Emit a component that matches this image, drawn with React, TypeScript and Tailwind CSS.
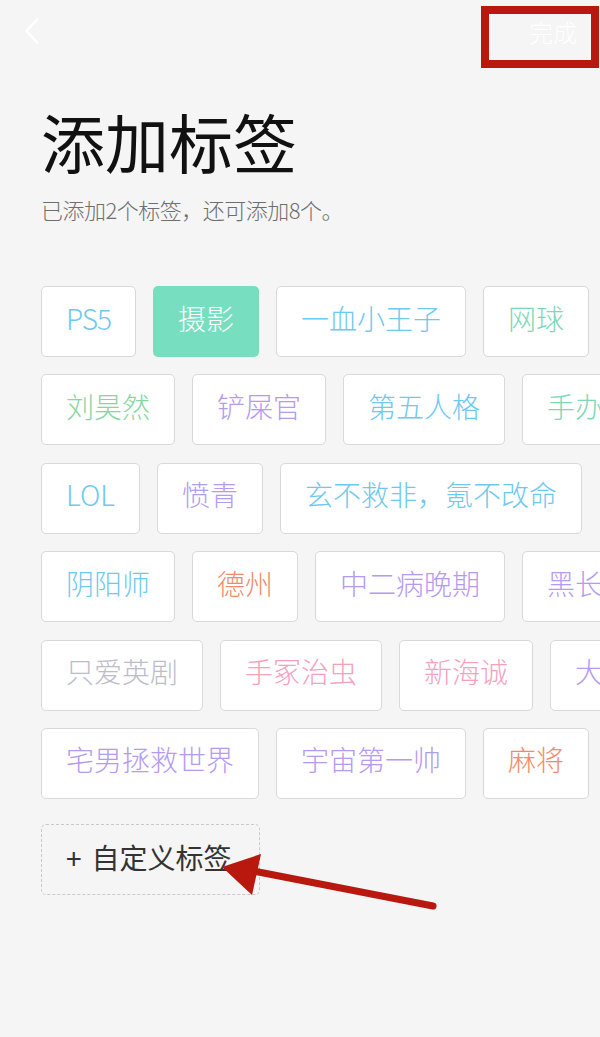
import React from "react";

type Tag = { t: string; c: string; active?: boolean; x?: string };

const BLUE = "text-[#6ec9ef]";
const GREEN = "text-[#86d6a2]";
const TEAL = "text-[#7bd9b6]";
const PURPLE = "text-[#b59af0]";
const ORANGE = "text-[#ef8b6c]";
const PINK = "text-[#f5a1bd]";
const GRAY = "text-[#bcbccb]";

const rows: Tag[][] = [
  [
    { t: "PS5", c: BLUE, x: "tracking-[-1px]" },
    { t: "摄影", c: "text-white", active: true },
    { t: "一血小王子", c: BLUE },
    { t: "网球", c: TEAL },
  ],
  [
    { t: "刘昊然", c: GREEN },
    { t: "铲屎官", c: PURPLE },
    { t: "第五人格", c: BLUE },
    { t: "手办控", c: TEAL },
  ],
  [
    { t: "LOL", c: BLUE },
    { t: "愤青", c: PURPLE },
    { t: "玄不救非，氪不改命", c: BLUE },
  ],
  [
    { t: "阴阳师", c: BLUE },
    { t: "德州", c: ORANGE },
    { t: "中二病晚期", c: PURPLE },
    { t: "黑长直", c: PURPLE },
  ],
  [
    { t: "只爱英剧", c: GRAY },
    { t: "手冢治虫", c: PINK },
    { t: "新海诚", c: PINK },
    { t: "大长腿", c: PURPLE },
  ],
  [
    { t: "宅男拯救世界", c: PURPLE },
    { t: "宇宙第一帅", c: PURPLE },
    { t: "麻将", c: ORANGE },
  ],
];

function TagChip({ tag }: { tag: Tag }) {
  return (
    <div
      className={
        tag.active
          ? "shrink-0 h-[71px] px-[25px] pb-[8px] flex items-center rounded-[5px] bg-[#78dec0] text-[28px] font-light leading-none text-white"
          : `shrink-0 h-[71px] px-[24px] pb-[8px] flex items-center rounded-[5px] bg-white border border-[#d9d9d9] text-[28px] font-light leading-none ${tag.c} ${tag.x ?? ""}`
      }
    >
      {tag.t}
    </div>
  );
}

export default function App() {
  return (
    <div className="relative w-[600px] h-[1037px] overflow-hidden bg-[#f5f5f5] font-['Noto_Sans_CJK_SC','Noto_Sans',sans-serif]">
      {/* header */}
      <div className="flex items-start justify-between">
        <div className="ml-[24px] mt-[18px] w-[16px] h-[26px]">
          <svg width="16" height="26" viewBox="0 0 16 26" fill="none">
            <path d="M13 1.5 L2.5 13 L13 24.5" stroke="#ffffff" strokeWidth="2.4" strokeLinecap="round" strokeLinejoin="round" />
          </svg>
        </div>
        <div className="mt-[6px] mr-[1px] w-[118px] h-[62px] border-[8px] border-[#b9180f] flex items-start justify-end pt-[6px] pr-[14px]">
          <span className="text-[24px] font-light leading-none text-white">完成</span>
        </div>
      </div>

      {/* title */}
      <div className="ml-[41px] mt-[40px] text-[64px] leading-none text-[#111111]">添加标签</div>
      <div className="ml-[41px] mt-[26px] text-[22px] font-light leading-none tracking-[-0.5px] text-[#6e6e6e]">已添加2个标签，还可添加8个。</div>

      {/* tags */}
      <div className="mt-[66px] ml-[41px] flex flex-col gap-y-[17.4px]">
        {rows.map((row, i) => (
          <div key={i} className="flex flex-nowrap gap-x-[17px]">
            {row.map((tag, j) => (
              <TagChip key={j} tag={tag} />
            ))}
          </div>
        ))}
      </div>

      <div className="mt-[25px] ml-[41px] w-[219px] h-[71px] rounded-[5px] border border-dashed border-[#c9c9c9] flex items-center pl-[24px] pb-[5px] text-[28px] leading-none text-[#333333]">
        <span className="mr-[10px]">+</span>
        <span>自定义标签</span>
      </div>

      {/* annotation arrow */}
      <svg className="absolute inset-0 pointer-events-none" width="600" height="1037" viewBox="0 0 600 1037">
        <line x1="433" y1="906" x2="248" y2="870" stroke="#b9180f" strokeWidth="7" strokeLinecap="round" />
        <polygon points="222,867 261,854 252,895" fill="#b9180f" />
      </svg>
    </div>
  );
}
